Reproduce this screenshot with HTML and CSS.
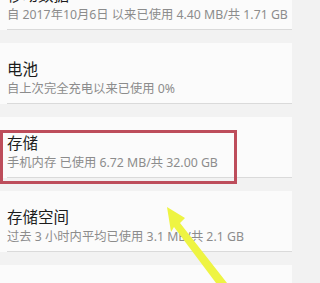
FILE: index.html
```html
<!DOCTYPE html>
<html lang="zh">
<head>
<meta charset="utf-8">
<link rel="stylesheet" href="styles.css">
</head>
<body>
<div class="page">
  <div class="item">
    <div class="title">移动数据</div>
    <div class="sub">自 2017年10月6日 以来已使用 4.40 MB/共 1.71 GB</div>
    <div class="divider"></div>
  </div>
  <div class="item">
    <div class="title">电池</div>
    <div class="sub">自上次完全充电以来已使用 0%</div>
    <div class="divider"></div>
  </div>
  <div class="item item-marked">
    <div class="title">存储</div>
    <div class="sub">手机内存 已使用 6.72 MB/共 32.00 GB</div>
    <div class="divider"></div>
    <div class="highlight"></div>
  </div>
  <div class="item">
    <div class="title">存储空间</div>
    <div class="sub">过去 3 小时内平均已使用 3.1 MB/共 2.1 GB</div>
    <div class="divider"></div>
  </div>
  <div class="item">
    <div class="title">应用通知管理</div>
    <div class="sub">&nbsp;</div>
    <div class="divider"></div>
  </div>
</div>
<svg class="arrow" width="292" height="283" viewBox="0 0 292 283">
  <polygon points="167,207 185,218 180,223 227,283 216,283 174,227 171,232" fill="#eef443"/>
</svg>
</body>
</html>
```

FILE: styles.css
```css
html, body {
  margin: 0;
  padding: 0;
  background: #f2f2f2;
  width: 292px;
  height: 283px;
  overflow: hidden;
  position: relative;
}
.page {
  margin-top: -31px;
  display: flex;
  flex-direction: column;
  gap: 13px;
  font-family: "Noto Sans", "Noto Sans CJK SC", sans-serif;
}
.item {
  position: relative;
  background: #fbfbfb;
  padding-top: 16px;
}
.title {
  padding-left: 7px;
  font-size: 15.5px;
  line-height: 20px;
  height: 20px;
  color: #1c1c1c;
  white-space: nowrap;
}
.sub {
  padding-left: 7px;
  font-size: 12.3px;
  line-height: 18px;
  height: 18px;
  color: #8c8c8c;
  white-space: nowrap;
  margin-top: 1px;
  margin-bottom: 5px;
}
.divider {
  margin-left: 7px;
  height: 1px;
  background: #dadada;
}
.highlight {
  position: absolute;
  left: 0;
  top: 13px;
  width: 231px;
  height: 48px;
  border: 3px solid #bd4d5b;
}
.arrow {
  position: absolute;
  left: 0;
  top: 0;
}
```
